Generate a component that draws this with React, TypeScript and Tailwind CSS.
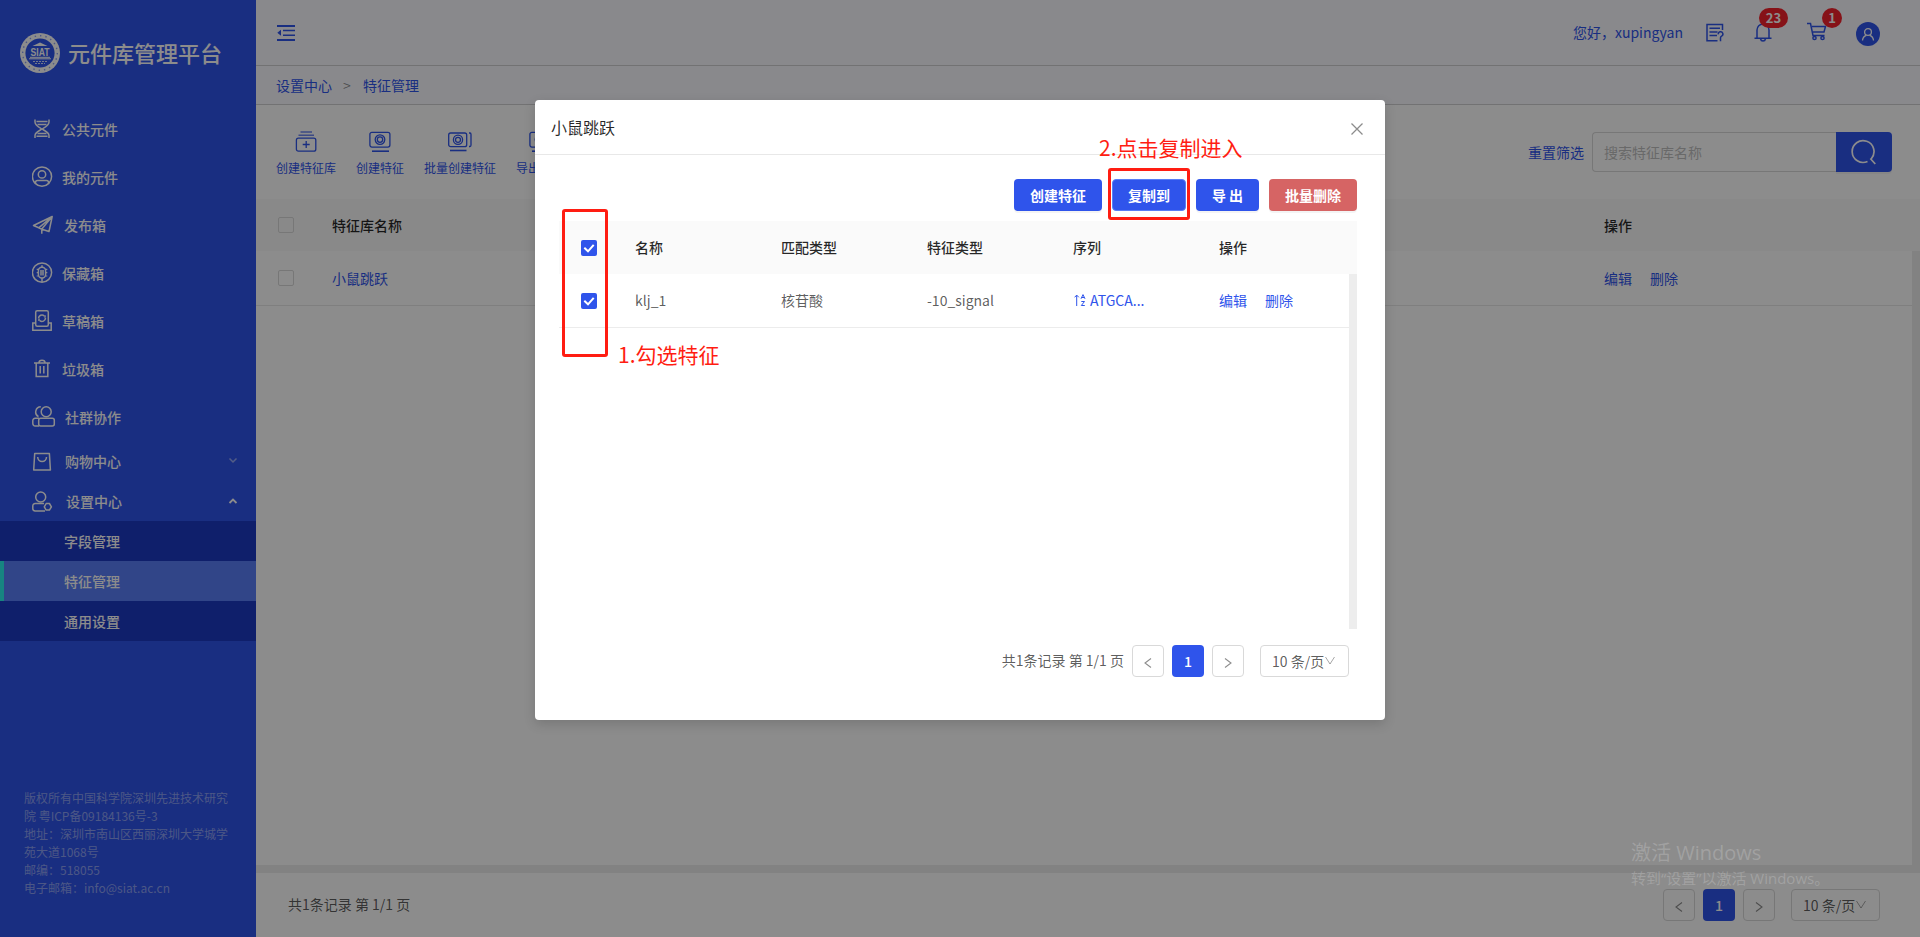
import type { ReactNode } from "react";

const FONT = "font-['Noto_Sans_CJK_SC','Noto_Sans',sans-serif]";

function Svg({ w, h, children, className = "", sw = 1.5 }: { w: number; h: number; children: ReactNode; className?: string; sw?: number }) {
  return (
    <svg width={w} height={h} viewBox={`0 0 ${w} ${h}`} fill="none" stroke="currentColor" strokeWidth={sw} className={`shrink-0 ${className}`}>
      {children}
    </svg>
  );
}

const DnaIcon = () => (
  <Svg w={24} h={24}>
    <path d="M3 2.500V5c0 3.500 3.500 5 7 7s7 3.500 7 6.500v2.500M17 2.500V5c0 3.500-3.500 5-7 7s-7 3.500-7 6.500v2.500" />
    <path d="M4.500 4.500h11M5.500 7.500h9M5.500 16.500h9M4.500 19.300h11" />
  </Svg>
);
const UserCircleIcon = () => (
  <Svg w={24} h={24}>
    <circle cx="10" cy="11.600" r="9.600" />
    <circle cx="10" cy="9.400" r="3.700" />
    <path d="M3.500 18.500v-1q0-2 2-2h9q2 0 2 2v1" />
  </Svg>
);
const PlaneIcon = () => (
  <Svg w={24} h={24}>
    <path d="M20.200 3.500 1.500 12.500l5.200 2.300 3.300 1.400 7 2.300zM20.200 3.500 6.700 14.800M20.200 3.500 9.800 16v4.800" strokeLinejoin="round" />
  </Svg>
);
const CollectIcon = () => (
  <Svg w={24} h={24}>
    <circle cx="10" cy="11.600" r="9.600" />
    <rect x="6.400" y="6.200" width="7.200" height="10.800" rx="3.400" />
    <path d="M9 9v5.500M11 9v5.500M10 4.300v2M10 17v4" />
    <path d="M4.700 8.300h2M4.700 11.600h2M4.700 15h2M13.300 8.300h2M13.300 11.600h2M13.300 15h2" strokeWidth="1.200" />
  </Svg>
);
const DraftIcon = () => (
  <Svg w={24} h={24}>
    <rect x="3.700" y="1.700" width="12.600" height="15.600" rx="1.500" />
    <path d="M3.700 14H.800v7.300h18.400V14h-3" />
    <path d="M6.500 9.300a3.500 3.500 0 0 1 5.700-2.500M13.500 9a3.500 3.500 0 0 1-5.700 2.700" />
    <path d="M13 6.300v2.500M7 9.600v2.500" />
  </Svg>
);
const TrashIcon = () => (
  <Svg w={24} h={24}>
    <path d="M2 6h16M7 5.500q0-2.300 3-2.300t3 2.300M4.200 6v13.500h11.600V6M8.200 9v7.500M11.800 9v7.500" />
  </Svg>
);
const GroupIcon = () => (
  <Svg w={24} h={24}>
    <circle cx="14.200" cy="6.700" r="5" />
    <rect x="6.700" y="13.300" width="15.600" height="7.700" rx="2" />
    <path d="M8.800 1.800a5.200 5.200 0 0 0-2.300 9.800M7 13.300H3.200a2.400 2.400 0 0 0-2.400 2.500v2.700A2.400 2.400 0 0 0 3.200 21H7" />
  </Svg>
);
const BagIcon = () => (
  <Svg w={24} h={24}>
    <path d="M2.700 4.500h14.700l1 16.500H1.700zM5.700 8a4.400 4.400 0 0 0 8.800 0" strokeLinejoin="round" />
  </Svg>
);
const UserGearIcon = () => (
  <Svg w={24} h={24}>
    <circle cx="8.700" cy="8" r="5" />
    <path d="M12 14.500H3.200A2.400 2.400 0 0 0 .800 17v2.600A2.400 2.400 0 0 0 3.200 22H13" />
    <path d="M14.200 14.500h3.200l2 3.300-2 3.300h-3.200l-1.900-3.300z" strokeLinejoin="round" />
  </Svg>
);

const MENU: { label: string; icon: ReactNode; pad: string }[] = [
  { label: "公共元件", icon: <DnaIcon />, pad: "pl-[6px]" },
  { label: "我的元件", icon: <UserCircleIcon />, pad: "pl-[6px]" },
  { label: "发布箱", icon: <PlaneIcon />, pad: "pl-2" },
  { label: "保藏箱", icon: <CollectIcon />, pad: "pl-[6px]" },
  { label: "草稿箱", icon: <DraftIcon />, pad: "pl-[6px]" },
  { label: "垃圾箱", icon: <TrashIcon />, pad: "pl-[6px]" },
  { label: "社群协作", icon: <GroupIcon />, pad: "pl-[9px]" },
];

function Logo() {
  return (
    <svg width="40" height="40" viewBox="0 0 40 40" className="shrink-0">
      <circle cx="20" cy="20" r="20" fill="#fff" />
      <circle cx="20" cy="20" r="17.300" fill="none" stroke="#2f54eb" strokeWidth="1.400" strokeDasharray="1.400 4" opacity="0.55" />
      <circle cx="20" cy="20" r="14.600" fill="#2f54eb" />
      <path d="M12.500 13 20 9.500 27.500 13z" fill="#fff" />
      <path d="M10 24.300h20M9 25.800h22" stroke="#fff" strokeWidth="1" />
      <path d="M13 28.500h14M15 30.500h10" stroke="#fff" strokeWidth="0.800" strokeDasharray="2 1" />
      <text x="20" y="23" textAnchor="middle" fontSize="10.500" fontWeight="700" fill="#fff" fontFamily="Liberation Sans" textLength="19" lengthAdjust="spacingAndGlyphs">SIAT</text>
    </svg>
  );
}

function Sidebar() {
  return (
    <aside className="flex h-full w-64 shrink-0 flex-col bg-[#2f54eb] text-sm font-medium text-white">
      <div className="flex h-[105px] items-start pl-5 pt-[33px]">
        <Logo />
        <span className="-mt-px ml-2 text-[22px] leading-[40px] font-medium">元件库管理平台</span>
      </div>
      {MENU.map((m) => (
        <div key={m.label} className="flex h-12 shrink-0 items-center pl-8">
          {m.icon}
          <span className={m.pad}>{m.label}</span>
        </div>
      ))}
      <div className="flex h-10 shrink-0 items-center pl-8">
        <BagIcon />
        <span className="pl-[9px]">购物中心</span>
        <Svg w={10} h={8} sw={1.500} className="mr-[18px] ml-auto opacity-50"><path d="M1.500 1.500 5 5l3.500-3.500" /></Svg>
      </div>
      <div className="flex h-10 shrink-0 items-center pl-8">
        <UserGearIcon />
        <span className="pl-[10px]">设置中心</span>
        <Svg w={10} h={8} sw={1.800} className="mr-[18px] ml-auto"><path d="M1.500 6 5 2.500 8.500 6" /></Svg>
      </div>
      <div className="flex h-10 shrink-0 items-center bg-[#1d39c4] pl-16">字段管理</div>
      <div className="flex h-10 shrink-0 items-center border-l-4 border-[#2bf0ec] bg-[#597ef7] pl-[60px]">特征管理</div>
      <div className="flex h-10 shrink-0 items-center bg-[#1d39c4] pl-16">通用设置</div>
      <div className="mt-auto pb-10 pl-6 text-xs leading-[18px] font-normal whitespace-nowrap text-white/45">
        <p>版权所有中国科学院深圳先进技术研究</p>
        <p>院 粤ICP备09184136号-3</p>
        <p>地址：深圳市南山区西丽深圳大学城学</p>
        <p>苑大道1068号</p>
        <p>邮编：518055</p>
        <p>电子邮箱：info@siat.ac.cn</p>
      </div>
    </aside>
  );
}

function Header() {
  return (
    <header className="flex h-[66px] shrink-0 items-center border-b border-[#cfcfd2] bg-[#f9faff] pr-10 pl-[21px] text-[#2f54eb]">
      <Svg w={18} h={18} sw={2}>
        <path d="M0 2h18M0 16h18" />
        <path d="M6 6.500h12M6 11.300h12" strokeWidth="1.600" />
        <path d="M4 5.800v6L.300 8.800z" fill="currentColor" stroke="none" />
      </Svg>
      <span className="-mt-0.5 ml-auto text-sm">您好，xupingyan</span>
      <Svg w={20} h={20} sw={1.500} className="ml-[22px]">
        <path d="M17.500 7V1.500H2V17.800h10.500M4.500 5.300h10.500M4.500 9h8M4.500 12.500h7.500" />
        <path d="M13.300 11.300a2.300 2.300 0 1 1 3.300 1.800q-1.100.600-1.100 1.700v3.400" />
      </Svg>
      <div className="relative -mt-px ml-[29px]">
        <Svg w={18} h={20} sw={1.500}>
          <path d="M3 16V8a6 6 0 0 1 12 0v8M.500 16.300h17M6.500 17q.500 2 2.500 2t2.500-2" />
        </Svg>
        <span className="absolute -top-[14px] left-[5px] flex h-5 w-[29px] items-center justify-center rounded-full bg-[#f5222d] text-[13px] font-bold text-white">23</span>
      </div>
      <div className="relative -mt-px ml-[35px]">
        <Svg w={20} h={20} sw={1.500}>
          <path d="M0 1.500h3.500L6 13.500h11.500M5 4.500h13.500L17 10H6" />
          <circle cx="7.500" cy="16" r="1.600" />
          <circle cx="15.500" cy="16" r="1.600" />
        </Svg>
        <span className="absolute -top-[14px] left-[15px] flex h-5 w-5 items-center justify-center rounded-full bg-[#f5222d] text-[13px] font-bold text-white">1</span>
      </div>
      <div className="mt-[3px] ml-[29px] flex h-6 w-6 items-center justify-center rounded-full bg-[#2f54eb] text-white">
        <Svg w={14} h={14} sw={1.300}>
          <circle cx="7" cy="5" r="3.400" />
          <path d="M1.500 13.500q.300-4 3.800-5.200M12.500 13.500q-.300-4-3.800-5.200" />
        </Svg>
      </div>
    </header>
  );
}

const BoxIcon = () => (
  <Svg w={24} h={24} sw={1.300}>
    <rect x="1.900" y="2.300" width="20" height="14.800" rx="2" />
    <circle cx="12" cy="9.600" r="4.800" />
    <circle cx="12" cy="9.600" r="2.700" />
    <path d="M4 21.200h17" strokeWidth="1.600" />
  </Svg>
);

function Tool({ icon, label }: { icon: ReactNode; label: string }) {
  return (
    <div className="flex flex-col items-center">
      {icon}
      <span className="mt-[5px] text-xs leading-[18px] whitespace-nowrap">{label}</span>
    </div>
  );
}

function Toolbar() {
  return (
    <div className="flex h-[94px] shrink-0 items-start justify-between pr-7 pl-5 text-[#2f54eb]">
      <div className="flex gap-5 pt-[25px]">
        <Tool
          label="创建特征库"
          icon={
            <Svg w={24} h={24} sw={1.300}>
              <rect x="2.400" y="8.200" width="19.400" height="13" rx="2" />
              <path d="M12.200 11v7M8.700 14.500h7" />
              <path d="M4.500 5.200h15.500M6.500 2h11.500" strokeWidth="1.600" opacity="0.7" />
            </Svg>
          }
        />
        <Tool label="创建特征" icon={<BoxIcon />} />
        <Tool
          label="批量创建特征"
          icon={
            <Svg w={24} h={24} sw={1.300}>
              <rect x=".7" y="3" width="18" height="13.700" rx="2" />
              <circle cx="10" cy="9.800" r="4.600" />
              <circle cx="10" cy="9.800" r="2.500" />
              <path d="M2 20.500h16.500" strokeWidth="1.600" />
              <path d="M21 3h1q1 0 1 1.500v10.500q0 1.500-1 1.500h-1" />
            </Svg>
          }
        />
        <Tool label="导出特征" icon={<BoxIcon />} />
      </div>
      <div className="flex items-center pt-[27px] text-sm">
        <span className="mr-2">重置筛选</span>
        <div className="flex h-10 w-[244px] items-center rounded-l border border-r-0 border-[#d9d9d9] pl-[11px] text-[#bfbfbf]"><span className="-mt-px">搜索特征库名称</span></div>
        <div className="flex h-10 w-14 items-center justify-center rounded-r bg-[#2f54eb] text-white shadow-[0_2px_0_rgba(0,0,0,0.045)]">
          <Svg w={26} h={26} sw={1.700}>
            <path d="M16.500 22.500a10.900 10.900 0 1 1 3.800-2.800M19.300 19.500l5 5.500" />
          </Svg>
        </div>
      </div>
    </div>
  );
}

function Pagination() {
  return (
    <div className="flex text-sm text-black/65">
      <div className="flex h-8 w-8 items-center justify-center rounded border border-[#d9d9d9] text-black/45">
        <Svg w={10} h={12} sw={1.100} className="mt-1"><path d="M8 1.500 2 6l6 4.500" /></Svg>
      </div>
      <div className="ml-2 flex h-8 w-8 items-center justify-center rounded bg-[#2f54eb] font-medium text-white">1</div>
      <div className="ml-2 flex h-8 w-8 items-center justify-center rounded border border-[#d9d9d9] text-black/45">
        <Svg w={10} h={12} sw={1.100} className="mt-1"><path d="M2 1.500 8 6l-6 4.500" /></Svg>
      </div>
      <div className="ml-4 flex h-8 w-[89px] items-center rounded border border-[#d9d9d9] pl-[11px] whitespace-nowrap">
        <span>10 条/页</span>
        <Svg w={12} h={10} sw={1} className="text-black/35"><path d="M1.500 1 6 8l4.500-7" /></Svg>
      </div>
    </div>
  );
}

const EmptyBox = () => <span className="h-4 w-4 shrink-0 rounded-[2px] border border-[#d9d9d9]" />;

function MainPanel() {
  return (
    <main className="flex min-w-0 flex-1 flex-col bg-white text-sm">
      <Header />
      <nav className="flex h-[39px] shrink-0 items-center border-b border-[#cfcfd2] bg-[#f9faff] pl-5 text-[#2f54eb]">
        <span>设置中心</span>
        <span className="mx-[11px] w-[9px] text-sm text-black/45">&gt;</span>
        <span>特征管理</span>
      </nav>
      <Toolbar />
      <div className="flex h-[52px] shrink-0 items-center bg-[#fafafa] pl-[22px] font-medium text-black/85">
        <EmptyBox />
        <span className="ml-[38px] w-[1272px]">特征库名称</span>
        <span>操作</span>
      </div>
      <div className="flex min-h-0 flex-1">
        <div className="flex-1">
          <div className="flex h-[55px] items-center border-b border-[#e8e8e8] pl-[22px] text-[#2f54eb]">
            <EmptyBox />
            <span className="-mt-px ml-[38px] w-[1272px]">小鼠跳跃</span>
            <span className="-mt-px">编辑</span>
            <span className="-mt-px ml-[18px]">删除</span>
          </div>
        </div>
        <div className="w-2 bg-[#ededed]" />
      </div>
      <div className="h-2 shrink-0 bg-[#ededed]" />
      <footer className="flex h-16 shrink-0 items-center justify-between pr-10 pl-8">
        <span className="-mt-0.5 text-black/65">共1条记录 第 1/1 页</span>
        <Pagination />
      </footer>
    </main>
  );
}

const CheckedBox = () => (
  <span className="flex h-4 w-4 items-center justify-center rounded-[2px] bg-[#2f54eb] text-white">
    <Svg w={12} h={12} sw={2}><path d="M1.300 5.800 5 9.300l5.700-6.500" /></Svg>
  </span>
);

const COLS = "grid grid-cols-[76px_146px_146px_146px_146px_1fr] items-center";

function Modal() {
  return (
    <section className="relative flex h-[620px] w-[850px] flex-col rounded bg-white text-sm text-black/65 shadow-[0_4px_12px_rgba(0,0,0,0.15)]">
      <div className="flex h-[55px] shrink-0 items-center justify-between border-b border-[#e8e8e8] pr-[22px] pl-4 text-base text-black/85">
        <span>小鼠跳跃</span>
        <Svg w={12} h={12} sw={1.300} className="mt-[3px] text-black/45"><path d="M.500.500l11 11M11.500.500l-11 11" /></Svg>
      </div>
      <div className="flex justify-end gap-2.5 pt-6 pr-7 font-bold text-white">
        <button className="h-8 w-[88px] rounded bg-[#2f54eb] shadow-[0_2px_0_rgba(0,0,0,0.045)]">创建特征</button>
        <button className="h-8 w-[74px] rounded border border-[#597ef7] bg-[#2f54eb]">复制到</button>
        <button className="h-8 w-[63px] rounded bg-[#2f54eb] shadow-[0_2px_0_rgba(0,0,0,0.045)]">导 出</button>
        <button className="h-8 w-[88px] rounded bg-[#d66464] shadow-[0_2px_0_rgba(0,0,0,0.045)]">批量删除</button>
      </div>
      <div className="mt-[10px] flex h-[408px] flex-col pr-7 pl-6">
        <div className={`${COLS} h-[53px] shrink-0 bg-[#fafafa] pb-px font-medium text-black/85`}>
          <span className="pt-px pl-[22px]"><CheckedBox /></span>
          <span>名称</span>
          <span>匹配类型</span>
          <span>特征类型</span>
          <span>序列</span>
          <span>操作</span>
        </div>
        <div className="flex flex-1">
          <div className="flex-1">
            <div className={`${COLS} h-[54px] border-b border-[#ececec] pb-px`}>
              <span className="pt-px pl-[22px]"><CheckedBox /></span>
              <span>klj_1</span>
              <span>核苷酸</span>
              <span>-10_signal</span>
              <span className="flex items-center text-[#2f54eb]">
                <Svg w={12} h={12} sw={1} className="mr-1 ml-px">
                  <path d="M2.700 12V1.300M.600 3.300l2.100-2.200 2.100 2.200" />
                  <path d="M7 4.800 9 .600l2 4.200M7.700 3.500h2.600M7.300 7.500h3.200l-3.200 4h3.500" />
                </Svg>
                ATGCA...
              </span>
              <span className="flex gap-[18px] text-[#2f54eb]"><span>编辑</span><span>删除</span></span>
            </div>
          </div>
          <div className="w-2 bg-[#ededed]" />
        </div>
      </div>
      <div className="flex items-center justify-end gap-2 pt-4 pr-9">
        <span className="-mt-0.5">共1条记录 第 1/1 页</span>
        <Pagination />
      </div>

      <div className="absolute top-[109px] left-[27px] h-[148px] w-[46px] rounded-[3px] border-3 border-[#ff1d12]" />
      <div className="absolute top-[68px] left-[573px] h-[52px] w-[82px] rounded-[3px] border-3 border-[#ff1d12]" />
      <p className="absolute top-[239px] left-[83px] text-[21px] leading-[30px] whitespace-nowrap text-[#ff1d12]">1.勾选特征</p>
      <p className="absolute top-[32px] left-[564px] text-[21px] leading-[30px] whitespace-nowrap text-[#ff1d12]">2.点击复制进入</p>
    </section>
  );
}

export default function App() {
  return (
    <div className={`relative flex h-[937px] w-[1920px] overflow-hidden ${FONT}`}>
      <Sidebar />
      <MainPanel />
      <div className="absolute inset-0 flex items-start bg-black/45 pt-[100px] pl-[535px]">
        <Modal />
      </div>
      <div className="absolute top-[838px] left-[1631px] font-['Open_Sans','Noto_Sans_CJK_SC',sans-serif] whitespace-nowrap text-white/20">
        <p className="text-[20px] leading-[30px]">激活 Windows</p>
        <p className="text-[15px] leading-[20px]">转到“设置”以激活 Windows。</p>
      </div>
    </div>
  );
}
